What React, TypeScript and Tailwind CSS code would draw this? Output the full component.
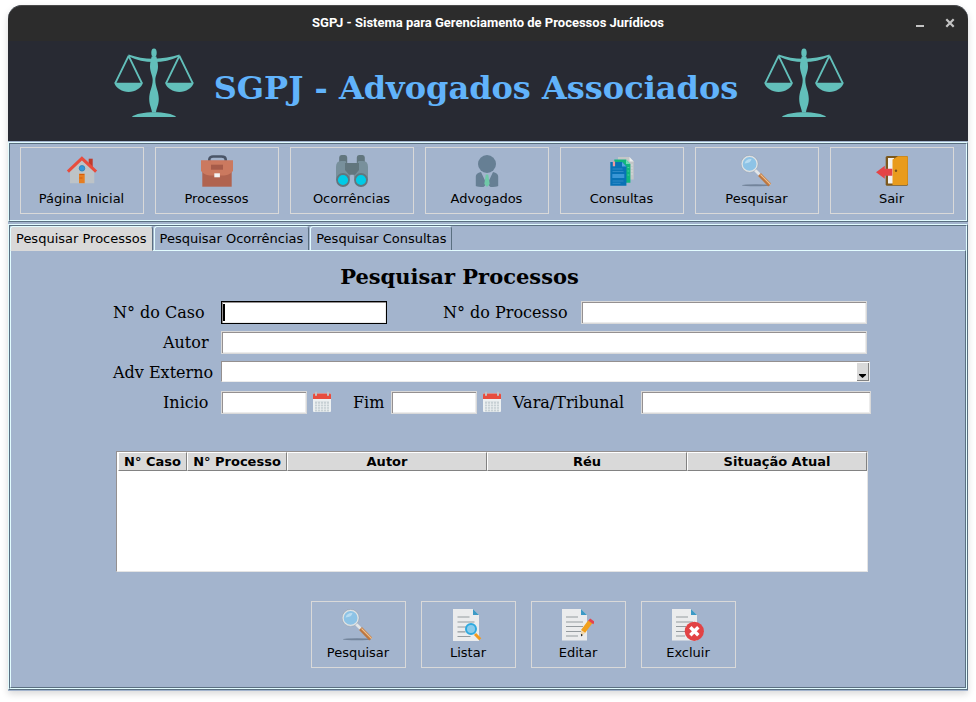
import type { ReactNode } from "react";

function Scales() {
  return (
    <svg className="h-[70px] w-20 shrink-0" viewBox="0 0 80 70" fill="#62bfba" aria-hidden="true">
      <ellipse cx="40" cy="4.8" rx="2.7" ry="4.4" />
      <path d="M14.500 6.600Q27 11 40 10.800T65.500 6.600L65.700 8.200Q53 14 40 14.100T14.300 8.200Z" />
      <path d="M37.6 8.5h4.8C43 12 44 14.500 44 18.500C44 24 41.300 27.500 41.300 32C41.300 39 44.800 43 44.800 51C44.800 57 42.500 60 42 64.500h-4C37.500 60 35.200 57 35.200 51C35.200 43 38.700 39 38.700 32C38.700 27.500 36 24 36 18.500C36 14.500 37 12 37.600 8.500Z" />
      <path d="M17.800 69C24 62.700 56 62.700 62.200 69Z" />
      <path d="M.3 34.800H28.900C27.500 40 21 44 14.600 44S1.700 40 .3 34.800Z" />
      <path d="M51.100 34.800H79.700C78.300 40 71.800 44 65.400 44S52.500 40 51.100 34.800Z" />
      <path d="M14.600 7.800L1.200 35.300M14.600 7.800L28 35.300M65.400 7.800L52 35.300M65.400 7.800L78.800 35.300" stroke="#62bfba" strokeWidth="1.900" fill="none" />
    </svg>
  );
}

function Icon({ children }: { children: ReactNode }) {
  return (
    <svg className="size-8 shrink-0" viewBox="0 0 32 32" aria-hidden="true">
      {children}
    </svg>
  );
}

const houseIcon = (
  <Icon>
    <path d="M22.700 3.700h4v9h-4z" fill="#c03a2b" />
    <path d="M16 4L28.300 15.500V28.200H4V15.500Z" fill="#bdc3c7" />
    <path d="M1.900 16.700L15.900 3.300L30.100 16.700" fill="none" stroke="#e84c3d" strokeWidth="3" />
    <circle cx="16" cy="13.300" r="2.800" fill="#3498db" stroke="#2980b9" strokeWidth=".8" />
    <path d="M13 18.700h5.700v9.500H13z" fill="#e67e22" />
    <path d="M13.500 19.500h4.700M13.500 23h3" stroke="#d35400" strokeWidth=".8" />
  </Icon>
);

const briefcaseIcon = (
  <Icon>
    <path d="M8.300 6V4.500C8.300 2.500 10 1.500 12 1.500h8.500c2.500 0 4.200 1 4.200 3V6" fill="none" stroke="#4a5568" strokeWidth="2.600" />
    <path d="M1.300 14h29.400v17.700H1.300z" fill="#b0634f" />
    <path d="M0 5.200h32v10.500C30 19 25 20.500 22 20.500H10C7 20.500 2 19 0 15.700Z" fill="#cb795f" />
    <path d="M10 9.700h12v5H10z" fill="#a65b49" />
    <path d="M13.300 18.300h5.600v4h-5.600z" fill="#f4f4f4" />
  </Icon>
);

const binocularsIcon = (
  <Icon>
    <path d="M3.200 8V2.500Q3.200 0 5.500 0H9Q11.200 0 11.200 2.500V9M20.800 9V2.500Q20.800 0 23 0h3.500Q28.800 0 28.800 2.500V8" fill="#62767e" />
    <path d="M0 12Q0 6 5 6h4.500l1.500 3h10l1.500-3H27q5 0 5 6v13H18.500l-1-6h-3l-1 6H0Z" fill="#78909c" />
    <path d="M9 8h14v7l-4 4.800h-6L9 15Z" fill="#62767e" />
    <circle cx="7" cy="25" r="6" fill="#00cbe6" stroke="#62767e" strokeWidth="1.800" />
    <circle cx="25" cy="25" r="6" fill="#00cbe6" stroke="#62767e" strokeWidth="1.800" />
  </Icon>
);

const lawyerIcon = (
  <Icon>
    <circle cx="16" cy="9" r="9" fill="#667f94" />
    <path d="M4.800 31V21.500Q4.800 18 10 17L14.200 26V30.500L12.500 32Q7 32 4.800 31ZM27.200 31V21.500Q27.200 18 22 17L17.800 26V30.500L19.500 32Q25 32 27.200 31Z" fill="#667f94" />
    <path d="M14.800 19.500h2.400L18.700 29 16 32 13.300 29Z" fill="#70c9a8" />
  </Icon>
);

const documentsIcon = (
  <Icon>
    <path d="M12 2h11.500l4.200 4.500v18H12z" fill="#c4c7c8" />
    <path d="M23.500 2v4.500h4.200z" fill="#eceeee" />
    <path d="M24.800 10h2M24.800 13h2M24.800 16h2M24.800 19h2" stroke="#e0e3e3" strokeWidth=".8" fill="none" />
    <path d="M8.300 4.500H20l4.400 4.500v18.800H8.300z" fill="#10b57e" />
    <path d="M20 4.500V9h4.400z" fill="#6fdcb4" />
    <path d="M21.500 12.500h1.800M21.500 16h1.800M21.500 20h1.800" stroke="#5dd3a8" strokeWidth=".8" fill="none" />
    <path d="M4.300 7H16l4.400 4.500v19.200H4.300z" fill="#0872b5" />
    <path d="M16 7v4.500h4.400z" fill="#55a7df" />
    <path d="M6.500 14h10M6.500 16.500h11M6.500 26h11M6.500 28.300h8" stroke="#3a90cb" strokeWidth=".8" />
    <path d="M6.300 19h12v4h-12z" fill="#3a97d6" />
    <path d="M6.800 6.500h2.300v4.800H6.800z" fill="#f19a9d" />
  </Icon>
);

const magnifierIcon = (
  <Icon>
    <ellipse cx="15" cy="30.300" rx="14" ry="1" fill="#67788e" opacity=".8" />
    <path d="M13.500 14.500L20 21" stroke="#e3e6e8" strokeWidth="2.800" />
    <path d="M18.500 19.500L28.700 30" stroke="#bd7740" strokeWidth="4" />
    <path d="M19.500 19.500L29.500 29.500" stroke="#efc18f" strokeWidth="1.100" />
    <circle cx="8.600" cy="8.900" r="7.700" fill="#8dc3e6" stroke="#e0e3e5" strokeWidth="1.600" />
    <path d="M3.500 8.500Q5 3.500 10.500 4Q10 8 3.500 8.500Z" fill="#b9dcf1" />
    <circle cx="8.600" cy="8.900" r="8.500" fill="none" stroke="#8994a0" strokeWidth=".4" />
  </Icon>
);

const exitIcon = (
  <Icon>
    <rect x="9.700" y="1" width="22.300" height="29.800" rx="1.500" fill="#7c581d" />
    <path d="M12 3h6v25.500h-6z" fill="#f2f2f2" />
    <path d="M16.500 4.500L22 1.300h8.500q1.300 0 1.300 1.300v26q0 1.500-1.300 1.500H16.500Z" fill="#e99b1c" />
    <path d="M0 17.300L8.800 10.700v3h7.500v7H8.800v3Z" fill="#e44446" />
    <circle cx="20" cy="15.700" r="1.200" fill="#76501a" />
  </Icon>
);

const listIcon = (
  <Icon>
    <path d="M1 0h20l6 6v26H1z" fill="#ebeced" />
    <path d="M21 0v6h6z" fill="#3d9ac6" />
    <path d="M5.500 8h12M5.500 13h17M5.500 18h10M5.500 22.800h8M5.500 27.500h13" stroke="#959b9f" strokeWidth="1.200" />
    <path d="M23 25l5.200 5.300" stroke="#f39a1e" strokeWidth="3" />
    <circle cx="19" cy="20" r="5" fill="#8accec" stroke="#2ea9df" strokeWidth="2" />
  </Icon>
);

const editIcon = (
  <Icon>
    <path d="M0 0h19l6 6v25.500H0z" fill="#ebeced" />
    <path d="M19 0v6h6z" fill="#3d9ac6" />
    <path d="M4 8h12M4 13h17M4 17.500h17M4 22.500h15M4 27h12" stroke="#959b9f" strokeWidth="1.200" />
    <path d="M21 22.500L28.300 12.800" stroke="#f2a01d" strokeWidth="5" />
    <path d="M26.200 11.500l2-2 4.500 3.200-1.400 2.600z" fill="#e6424c" />
    <path d="M19 21l4.200 3-4.100 3.200z" fill="#f3d8aa" />
    <path d="M18.900 24.700l2 1.400-1.800 1.400z" fill="#242424" />
  </Icon>
);

const deleteIcon = (
  <Icon>
    <path d="M0 0h19l6 6v25.500H0z" fill="#ebeced" />
    <path d="M19 0v6h6z" fill="#3d9ac6" />
    <path d="M4 8h12M4 13h17M4 17.500h10M4 22.500h9M4 27h9" stroke="#959b9f" strokeWidth="1.200" />
    <circle cx="22.300" cy="22.300" r="9.600" fill="#e24345" />
    <path d="M18.300 18.300l8 8M26.300 18.300l-8 8" stroke="#fff" strokeWidth="3.400" />
  </Icon>
);

/* Two-line relief: light over dark on the top left, dark round light on the bottom right. */
function Ridge({ className = "", children }: { className?: string; children: ReactNode }) {
  return (
    <div className={`flex flex-col border border-t-[#e2fcff] border-r-[#5a6f80] border-b-[#5a6f80] border-l-[#e2fcff] ${className}`}>
      <div className="flex grow flex-col border border-t-[#5a6f80] border-r-[#e2fcff] border-b-[#e2fcff] border-l-[#5a6f80]">
        {children}
      </div>
    </div>
  );
}

function IconButton({ label, icon }: { label: string; icon: ReactNode }) {
  return (
    <button type="button" className="flex h-[67px] flex-col items-center border border-[#d9d9d9] pt-[7px] pr-px">
      {icon}
      <span className="mt-[3px] leading-[18px]">{label}</span>
    </button>
  );
}

const bevel =
  "h-[23px] border border-[#d9d9d9] bg-white px-1 font-[DejaVu_Serif,serif] text-base shadow-[inset_1px_1px_0_#949090,inset_-1px_-1px_0_#ececec] outline-none";

function Label({ htmlFor, className, children }: { htmlFor: string; className: string; children: ReactNode }) {
  return (
    <label htmlFor={htmlFor} className={`shrink-0 whitespace-nowrap font-[DejaVu_Serif,serif] text-base leading-[23px] ${className}`}>
      {children}
    </label>
  );
}

function CalendarButton({ label }: { label: string }) {
  return (
    <button type="button" aria-label={label} className="mx-1 flex size-[22px] shrink-0 items-center justify-center">
      <svg className="h-[22px] w-5" viewBox="0 0 20 22" aria-hidden="true">
        <path d="M1 3.500q0-1 1-1h16q1 0 1 1V20q0 1-1 1H2q-1 0-1-1z" fill="#ecf0f1" />
        <path d="M1 8V3.500q0-1 1-1h16q1 0 1 1V8z" fill="#e84c3d" />
        <path d="M4 .8v4M16 .8v4" stroke="#bdc3c7" strokeWidth="2" />
        <path d="M3 10.500h14v10H3z" fill="#c7d0d4" />
        <path d="M3 13.200h14M3 15.700h14M3 18.200h14M5.500 10.500v10M8.500 10.500v10M11.500 10.500v10M14.500 10.500v10" stroke="#ecf0f1" strokeWidth=".8" />
      </svg>
    </button>
  );
}

function Tab({ label, selected = false }: { label: string; selected?: boolean }) {
  return (
    <button
      type="button"
      role="tab"
      aria-selected={selected}
      className={`rounded-t-[3px] border border-t-[#e2fcff] border-r-[#5a6f80] border-l-[#e2fcff] px-[5px] leading-[23px] whitespace-nowrap ${selected ? "relative border-b-[#d9d9d9] bg-[#d9d9d9]" : "border-b-[#e2fcff]"}`}
    >
      {label}
    </button>
  );
}

const columns = [
  { title: "N° Caso", width: "w-[69px]" },
  { title: "N° Processo", width: "w-[100px]" },
  { title: "Autor", width: "w-[200px]" },
  { title: "Réu", width: "w-[200px]" },
  { title: "Situação Atual", width: "" },
];

function SearchForm() {
  return (
    <form className="mt-[10px] flex flex-col gap-[7px]">
      <div className="flex">
        <Label htmlFor="caso" className="w-[108px]">N° do Caso</Label>
        <div className="relative w-[166px] shrink-0">
          <input id="caso" className={`${bevel} w-full border-black caret-transparent`} />
          <span className="pointer-events-none absolute top-[3px] left-[2px] h-[17px] w-[2px] bg-black" />
        </div>
        <Label htmlFor="processo" className="ml-14 w-[138px]">N° do Processo</Label>
        <input id="processo" className={`${bevel} mr-1 min-w-0 grow`} />
      </div>
      <div className="flex">
        <Label htmlFor="autor" className="w-[108px] pl-[50px]">Autor</Label>
        <input id="autor" className={`${bevel} mr-1 min-w-0 grow`} />
      </div>
      <div className="flex h-[23px]">
        <Label htmlFor="externo" className="w-[108px]">Adv Externo</Label>
        <div className="relative mr-px h-[21px] grow">
          <select
            id="externo"
            className="h-full w-full appearance-none border border-t-[#949090] border-r-[#ececec] border-b-[#ececec] border-l-[#949090] bg-white px-1 outline-none"
          />
          <span className="pointer-events-none absolute top-[2px] right-px flex h-[18px] w-3 items-end justify-center border-r border-b border-[#828282] bg-[#d9d9d9] pb-[2px]">
            <svg className="h-1 w-[7px]" viewBox="0 0 7 4" aria-hidden="true">
              <path d="M0 0h7v1L3.500 4 0 1z" />
            </svg>
          </span>
        </div>
      </div>
      <div className="flex">
        <Label htmlFor="inicio" className="w-[108px] pl-[50px]">Inicio</Label>
        <input id="inicio" className={`${bevel} w-[86px] shrink-0`} />
        <CalendarButton label="Escolher data de início" />
        <Label htmlFor="fim" className="ml-4 w-[38px]">Fim</Label>
        <input id="fim" className={`${bevel} w-[86px] shrink-0`} />
        <CalendarButton label="Escolher data de fim" />
        <Label htmlFor="vara" className="ml-[6px] w-32">Vara/Tribunal</Label>
        <input id="vara" className={`${bevel} min-w-0 grow`} />
      </div>
    </form>
  );
}

export default function App() {
  return (
    <div className="bg-white px-2 pt-[5px] pb-[11px] font-[DejaVu_Sans,sans-serif] text-[13px] text-black">
      <div className="rounded-t-[14px] bg-[#a3b4cd] pb-px shadow-[0_3px_7px_rgba(0,0,0,0.15)]">
        <header className="grid h-9 grid-cols-[1fr_auto_1fr] items-center rounded-t-[14px] border-t border-[#4a4a4a] bg-[#2c2c2c] pb-[2px] text-white">
          <span className="col-start-2 font-[Roboto,sans-serif] font-bold">
            SGPJ - Sistema para Gerenciamento de Processos Jurídicos
          </span>
          <div className="flex justify-end gap-[18px] pr-3">
            <button type="button" aria-label="Minimizar" className="size-3">
              <svg viewBox="0 0 12 12" aria-hidden="true"><path d="M2 8h8v2H2z" fill="#c4c4c4" /></svg>
            </button>
            <button type="button" aria-label="Fechar" className="size-3">
              <svg viewBox="0 0 12 12" aria-hidden="true"><path d="M2.300 2.300l7.400 7.400M9.700 2.300L2.300 9.700" stroke="#c4c4c4" strokeWidth="2.200" /></svg>
            </button>
          </div>
        </header>

        <div className="flex h-[100px] items-start justify-center gap-5 bg-[#282a33] pt-[7px] pr-[18px]">
          <Scales />
          <h1 className="mt-5 mr-[6px] font-[DejaVu_Serif,serif] text-[32px] leading-10 font-bold whitespace-nowrap text-[#61b3fb]">
            SGPJ - Advogados Associados
          </h1>
          <Scales />
        </div>

        <Ridge className="mt-px">
          <nav className="grid grid-cols-7 gap-[11px] pt-[3px] pr-3 pb-[6px] pl-[10px]">
            <IconButton label="Página Inicial" icon={houseIcon} />
            <IconButton label="Processos" icon={briefcaseIcon} />
            <IconButton label="Ocorrências" icon={binocularsIcon} />
            <IconButton label="Advogados" icon={lawyerIcon} />
            <IconButton label="Consultas" icon={documentsIcon} />
            <IconButton label="Pesquisar" icon={magnifierIcon} />
            <IconButton label="Sair" icon={exitIcon} />
          </nav>
        </Ridge>

        <Ridge className="mt-[2px]">
          <div role="tablist" className="-mb-px flex gap-px">
            <Tab label="Pesquisar Processos" selected />
            <Tab label="Pesquisar Ocorrências" />
            <Tab label="Pesquisar Consultas" />
          </div>
          <main className="border border-t-[#e2fcff] border-r-[#5a6f80] border-b-[#5a6f80] border-l-[#e2fcff] pt-3 pb-[19px] pl-2">
            <div className="mx-auto max-w-[758px]">
              <h2 className="pr-[65px] text-center font-[DejaVu_Serif,serif] text-[21px] leading-7 font-bold">
                Pesquisar Processos
              </h2>
              <SearchForm />
              <div className="mt-[37px] mr-[3px] ml-[3px] h-[121px] border border-t-[#949090] border-r-[#e4e4e4] border-b-[#e4e4e4] border-l-[#949090] bg-white pl-px">
                <table className="w-full table-fixed border-separate border-spacing-0">
                  <thead>
                    <tr>
                      {columns.map((column) => (
                        <th
                          key={column.title}
                          className={`${column.width} h-[19px] border border-t-white border-r-[#828282] border-b-[#828282] border-l-white bg-[#d9d9d9] p-0 text-center leading-[17px] font-bold whitespace-nowrap`}
                        >
                          {column.title}
                        </th>
                      ))}
                    </tr>
                  </thead>
                  <tbody />
                </table>
              </div>
              <div className="mt-[29px] flex justify-center pl-[63px]">
                <div className="grid grid-cols-[repeat(4,95px)] gap-[15px]">
                  <IconButton label="Pesquisar" icon={magnifierIcon} />
                  <IconButton label="Listar" icon={listIcon} />
                  <IconButton label="Editar" icon={editIcon} />
                  <IconButton label="Excluir" icon={deleteIcon} />
                </div>
              </div>
            </div>
          </main>
        </Ridge>
      </div>
    </div>
  );
}
